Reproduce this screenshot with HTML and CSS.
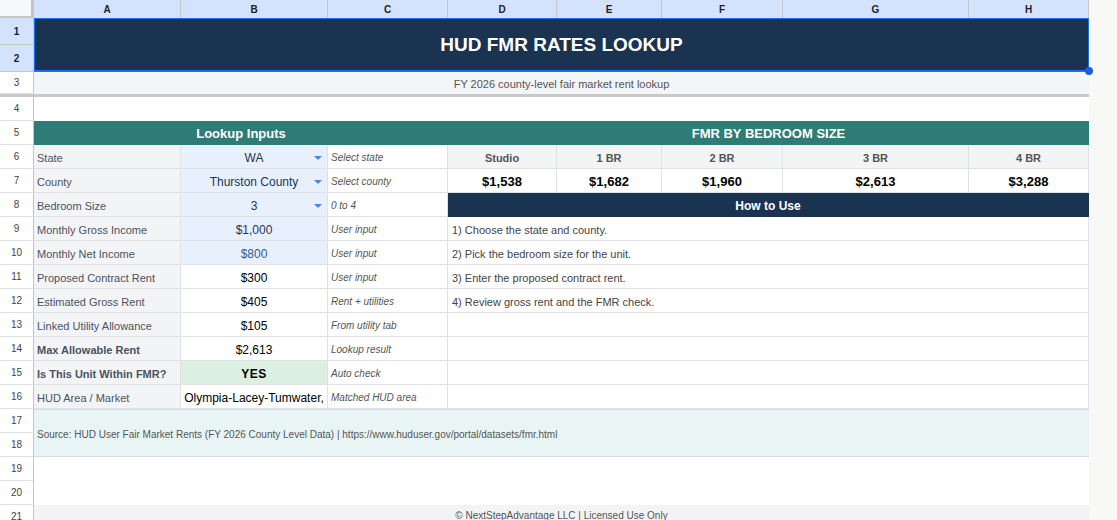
FILE: index.html
```html
<!DOCTYPE html>
<html lang="en">
<head>
    <meta charset="UTF-8">
    <meta name="viewport" content="width=device-width, initial-scale=1.0">
    <title>HUD FMR Rates Lookup</title>
    <link rel="stylesheet" href="styles.css">
</head>
<body>
<div class="sheet">
    <!-- column headers -->
    <div class="corner"></div>
    <div class="ch">A</div>
    <div class="ch">B</div>
    <div class="ch">C</div>
    <div class="ch">D</div>
    <div class="ch">E</div>
    <div class="ch">F</div>
    <div class="ch">G</div>
    <div class="ch">H</div>

    <!-- rows 1-3: title block -->
    <div class="rh sel">1</div>
    <div class="title">HUD FMR RATES LOOKUP<span class="handle"></span></div>
    <div class="rh sel">2</div>
    <div class="rh">3</div>
    <div class="subtitle">FY 2026 county-level fair market rent lookup</div>
    <div class="freeze"></div>

    <div class="rh">4</div>
    <div class="blank"></div>

    <div class="rh">5</div>
    <div class="band span3">Lookup Inputs</div>
    <div class="band span5">FMR BY BEDROOM SIZE</div>

    <div class="rh">6</div>
    <div class="cell label">State</div>
    <div class="cell input dd">WA</div>
    <div class="cell note">Select state</div>
    <div class="cell fmr-head">Studio</div>
    <div class="cell fmr-head">1 BR</div>
    <div class="cell fmr-head">2 BR</div>
    <div class="cell fmr-head">3 BR</div>
    <div class="cell fmr-head">4 BR</div>

    <div class="rh">7</div>
    <div class="cell label">County</div>
    <div class="cell input dd">Thurston County</div>
    <div class="cell note">Select county</div>
    <div class="cell fmr-val">$1,538</div>
    <div class="cell fmr-val">$1,682</div>
    <div class="cell fmr-val">$1,960</div>
    <div class="cell fmr-val">$2,613</div>
    <div class="cell fmr-val">$3,288</div>

    <div class="rh">8</div>
    <div class="cell label">Bedroom Size</div>
    <div class="cell input dd">3</div>
    <div class="cell note">0 to 4</div>
    <div class="cell howto span5">How to Use</div>

    <div class="rh">9</div>
    <div class="cell label">Monthly Gross Income</div>
    <div class="cell input">$1,000</div>
    <div class="cell note">User input</div>
    <div class="cell step span5">1) Choose the state and county.</div>

    <div class="rh">10</div>
    <div class="cell label">Monthly Net Income</div>
    <div class="cell input soft">$800</div>
    <div class="cell note">User input</div>
    <div class="cell step span5">2) Pick the bedroom size for the unit.</div>

    <div class="rh">11</div>
    <div class="cell label">Proposed Contract Rent</div>
    <div class="cell value">$300</div>
    <div class="cell note">User input</div>
    <div class="cell step span5">3) Enter the proposed contract rent.</div>

    <div class="rh">12</div>
    <div class="cell label">Estimated Gross Rent</div>
    <div class="cell value">$405</div>
    <div class="cell note">Rent + utilities</div>
    <div class="cell step span5">4) Review gross rent and the FMR check.</div>

    <div class="rh">13</div>
    <div class="cell label">Linked Utility Allowance</div>
    <div class="cell value">$105</div>
    <div class="cell note">From utility tab</div>
    <div class="cell step span5"></div>

    <div class="rh">14</div>
    <div class="cell label strong">Max Allowable Rent</div>
    <div class="cell value">$2,613</div>
    <div class="cell note">Lookup result</div>
    <div class="cell step span5"></div>

    <div class="rh">15</div>
    <div class="cell label strong">Is This Unit Within FMR?</div>
    <div class="cell value ok">YES</div>
    <div class="cell note">Auto check</div>
    <div class="cell step span5"></div>

    <div class="rh">16</div>
    <div class="cell label">HUD Area / Market</div>
    <div class="cell value">Olympia-Lacey-Tumwater,</div>
    <div class="cell note">Matched HUD area</div>
    <div class="cell step span5"></div>

    <div class="rh">17</div>
    <div class="source">Source: HUD User Fair Market Rents (FY 2026 County Level Data) | https://www.huduser.gov/portal/datasets/fmr.html</div>
    <div class="rh">18</div>

    <div class="rh">19</div>
    <div class="blank"></div>
    <div class="rh">20</div>
    <div class="blank"></div>

    <div class="rh">21</div>
    <div class="footer">&copy; NextStepAdvantage LLC | Licensed Use Only</div>
</div>
</body>
</html>
```

FILE: styles.css
```css
body {
    margin: 0;
    background-color: #f8f9f7;
    font-family: 'Liberation Sans', Arial, sans-serif;
    overflow: hidden;
}

.sheet {
    display: grid;
    grid-template-columns: 34px 147px 147px 120px 109px 105px 121px 186px 120px;
    grid-template-rows: 18px 27px 27px 22px 3px repeat(18, 24px);
    width: 1089px;
    background-color: #fff;
}

.sheet > div {
    box-sizing: border-box;
}

.corner {
    background-color: #f8f9fa;
    border-right: 3px solid #c4c7c5;
    border-bottom: 2px solid #c4c7c5;
}

.ch {
    display: flex;
    align-items: center;
    justify-content: center;
    background-color: #d3e3fd;
    border-right: 1px solid #c4c7c5;
    font-size: 10px;
    font-weight: bold;
    color: #1f1f1f;
}

.rh {
    display: flex;
    align-items: center;
    justify-content: center;
    background-color: #fff;
    border-right: 1px solid #c4c7c5;
    border-bottom: 1px solid #e1e1e1;
    font-size: 10px;
    color: #444;
}

.rh.sel {
    background-color: #d3e3fd;
    color: #0b1f3a;
    font-weight: bold;
    border-bottom-color: #c4c7c5;
}

.title {
    position: relative;
    grid-column: span 8;
    grid-row: span 2;
    display: flex;
    align-items: center;
    justify-content: center;
    padding-top: 1px;
    background-color: #1a3350;
    border: 1px solid #1a73e8;
    border-bottom-width: 2px;
    color: #fff;
    font-size: 19px;
    font-weight: bold;
}

.handle {
    position: absolute;
    right: -5px;
    bottom: -5px;
    width: 8px;
    height: 8px;
    border-radius: 50%;
    background-color: #1a5fe0;
}

.subtitle {
    grid-column: span 8;
    display: flex;
    align-items: center;
    justify-content: center;
    padding-top: 2px;
    background-color: #f4f5f7;
    color: #555;
    font-size: 11px;
}

.freeze {
    grid-column: 1 / -1;
    background-color: #c8c8c8;
}

.blank {
    grid-column: span 8;
}

.band {
    display: flex;
    align-items: center;
    justify-content: center;
    background-color: #2e7c76;
    color: #fff;
    font-size: 13px;
    font-weight: bold;
}

.span3 {
    grid-column: span 3;
}

.span5 {
    grid-column: span 5;
}

.cell {
    display: flex;
    align-items: center;
    padding: 2px 3px 0;
    border-right: 1px solid #dfe3e8;
    border-bottom: 1px solid #dfe3e8;
    overflow: hidden;
    white-space: nowrap;
    font-size: 11px;
}

.label {
    background-color: #f3f4f6;
    color: #4a5361;
}

.label.strong {
    font-weight: bold;
}

.input {
    position: relative;
    justify-content: center;
    background-color: #e8f0fe;
    color: #1c3557;
    font-size: 12px;
}

.input.soft {
    color: #35598a;
}

.dd::after {
    content: "";
    position: absolute;
    right: 5px;
    top: 11px;
    border-left: 4px solid transparent;
    border-right: 4px solid transparent;
    border-top: 4px solid #4285f4;
}

.value {
    justify-content: center;
    color: #000;
    font-size: 12px;
}

.value.ok {
    background-color: #dcf0e2;
    font-weight: bold;
    letter-spacing: 0.5px;
}

.note {
    color: #555;
    font-size: 10px;
    font-style: italic;
}

.fmr-head {
    justify-content: center;
    background-color: #f3f4f6;
    color: #555;
    font-weight: bold;
}

.fmr-val {
    justify-content: center;
    color: #000;
    font-size: 13px;
    font-weight: bold;
}

.howto {
    justify-content: center;
    background-color: #1a3350;
    border-color: #1a3350;
    color: #fff;
    font-size: 12px;
    font-weight: bold;
}

.step {
    color: #444;
    padding-left: 4px;
}

.source {
    grid-column: span 8;
    grid-row: span 2;
    display: flex;
    align-items: center;
    padding: 2px 3px 0;
    background-color: #e9f5f4;
    border-top: 1px solid #d5dbe1;
    border-bottom: 1px solid #d5dbe1;
    color: #555;
    font-size: 10px;
}

.footer {
    grid-column: span 8;
    display: flex;
    align-items: flex-end;
    justify-content: center;
    padding-bottom: 8px;
    background-color: #f3f4f6;
    color: #555;
    font-size: 10px;
}
```
